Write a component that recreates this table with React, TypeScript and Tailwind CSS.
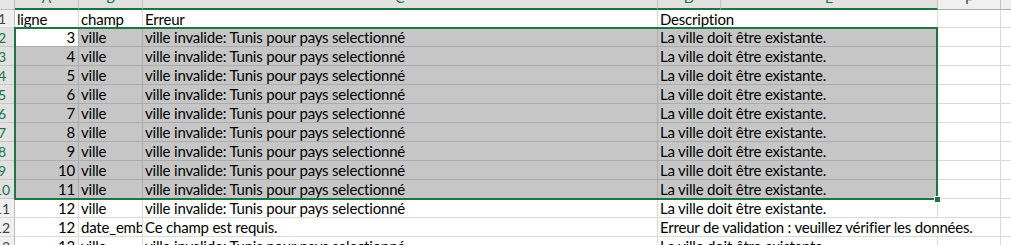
import React from 'react';

// Sheet column widths (each width includes its right grid line)
const COLS = [
  { key: 'A', w: 'w-[64px]' },
  { key: 'B', w: 'w-[64px]' },
  { key: 'C', w: 'w-[515px]' },
  { key: 'D', w: 'w-[63px]' },
  { key: 'E', w: 'w-[217px]' },
  { key: 'F', w: 'w-[63px]' },
];

interface Row {
  n: number;
  ligne: string;
  champ: string;
  erreur: string;
  desc: string;
  selected?: boolean;
  active?: boolean;
  wideDesc?: boolean;
}

const ERR = 'ville invalide: Tunis pour pays selectionné';
const DESC = 'La ville doit être existante.';

const rows: Row[] = [
  ...[3, 4, 5, 6, 7, 8, 9, 10, 11].map((v, i) => ({
    n: i + 2,
    ligne: String(v),
    champ: 'ville',
    erreur: ERR,
    desc: DESC,
    selected: true,
    active: i === 0,
  })),
  { n: 11, ligne: '12', champ: 'ville', erreur: ERR, desc: DESC },
  {
    n: 12,
    ligne: '12',
    champ: 'date_embauche',
    erreur: 'Ce champ est requis.',
    desc: 'Erreur de validation : veuillez vérifier les données.',
    wideDesc: true,
  },
  { n: 13, ligne: '13', champ: 'ville', erreur: ERR, desc: DESC },
];

const font = "font-['Lato','Liberation_Sans',sans-serif]";

function RowHeader({ n, selected, h }: { n: number; selected?: boolean; h: string }) {
  return (
    <div
      className={`${h} w-[15px] shrink-0 overflow-hidden border-r border-b ${
        selected ? 'bg-[#e1e1e1] text-[#217346] border-b-[#c8c8c8]' : 'bg-[#f0f0f0] text-[#444] border-b-[#d8d8d8]'
      } border-r-[#bdbdbd] flex items-center pt-[1px]`}
    >
      <div className="w-[30px] ml-[-13px] shrink-0 text-center text-[14px] tracking-normal leading-none">{n}</div>
    </div>
  );
}

function DataRow({ r }: { r: Row }) {
  const fill = r.selected ? 'bg-[#c6c6c6]' : 'bg-white';
  const line = r.selected ? 'border-[#acacac]' : 'border-[#dadada]';
  const cell = `h-full shrink-0 border-r border-b ${line} flex items-center pt-[1px] px-[2px] whitespace-nowrap overflow-hidden`;
  return (
    <div className="flex h-[19px]">
      <RowHeader n={r.n} selected={r.selected} h="h-[19px]" />
      <div className={`${cell} w-[64px] justify-end pr-[3px] ${r.active ? 'bg-white' : fill}`}>{r.ligne}</div>
      <div className={`${cell} w-[64px] ${fill}`}>{r.champ}</div>
      <div className={`${cell} w-[515px] ${fill}`}>{r.erreur}</div>
      {r.wideDesc ? (
        <div className={`${cell} w-[343px] ${fill} border-b-[#dadada]`}>{r.desc}</div>
      ) : (
        <>
          <div className={`${cell} w-[280px] ${fill}`}>{r.desc}</div>
          <div className={`${cell} w-[63px] bg-white border-[#dadada]`} />
        </>
      )}
      <div className="h-full grow border-b border-[#dadada] bg-white" />
    </div>
  );
}

export default function App() {
  return (
    <div className={`w-[1011px] h-[245px] overflow-hidden bg-white text-[15px] tracking-[-0.2px] text-black ${font}`}>
      {/* column letters, cut off at the top edge */}
      <div className="flex h-[10px]">
        <div className="w-[15px] shrink-0 bg-[#e6e6e6] border-r border-b border-[#bdbdbd]" />
        {COLS.map((c) => {
          const sel = c.key !== 'F';
          return (
            <div
              key={c.key}
              className={`${c.w} shrink-0 flex items-end justify-center overflow-hidden border-r ${
                sel
                  ? 'bg-[#e1e1e1] text-[#217346] border-b-2 border-b-[#217346] border-r-[#c4c4c4]'
                  : 'bg-[#f0f0f0] text-[#444] border-b border-b-[#ababab] border-r-[#c4c4c4]'
              }`}
            >
              <span className="text-[14px] tracking-normal leading-none mb-[3px]">{c.key}</span>
            </div>
          );
        })}
        <div className="grow bg-[#f0f0f0] border-b border-[#ababab]" />
      </div>

      {/* row 1: column titles */}
      <div className="flex h-[18px]">
        <RowHeader n={1} h="h-[18px]" />
        <div className="w-[64px] h-full shrink-0 border-r border-b border-[#dadada] flex items-center pt-[1px] px-[2px]">ligne</div>
        <div className="w-[64px] h-full shrink-0 border-r border-b border-[#dadada] flex items-center pt-[1px] px-[2px]">champ</div>
        <div className="w-[515px] h-full shrink-0 border-r border-b border-[#dadada] flex items-center pt-[1px] px-[2px]">Erreur</div>
        <div className="w-[280px] h-full shrink-0 border-r border-b border-[#dadada] flex items-center pt-[1px] px-[2px] whitespace-nowrap">
          Description
        </div>
        <div className="w-[63px] h-full shrink-0 border-r border-b border-[#dadada]" />
        <div className="grow h-full border-b border-[#dadada]" />
      </div>

      {/* selected block A2:E10 with its outline laid over the cells */}
      <div className="relative">
        {rows.slice(0, 9).map((r) => (
          <DataRow key={r.n} r={r} />
        ))}
        <div className="absolute left-[14px] top-[-1px] w-[924px] h-[173px] border-2 border-[#217346] pointer-events-none">
          <div className="absolute right-[-5px] bottom-[-5px] w-[7px] h-[7px] bg-[#217346] border border-white" />
        </div>
      </div>

      {rows.slice(9).map((r) => (
        <DataRow key={r.n} r={r} />
      ))}
    </div>
  );
}
